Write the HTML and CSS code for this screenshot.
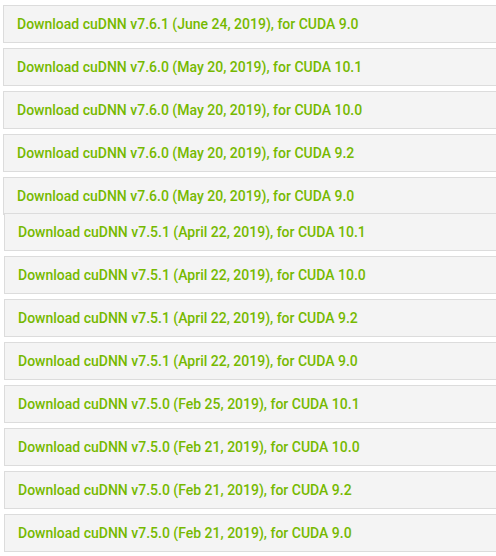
FILE: index.html
```html
<!DOCTYPE html>
<html>
<head>
<meta charset="utf-8">
<link rel="stylesheet" href="styles.css">
</head>
<body>
<div class="page">
  <div class="group first">
    <div class="item"><a>Download cuDNN v7.6.1 (June 24, 2019), for CUDA 9.0</a></div>
    <div class="item"><a>Download cuDNN v7.6.0 (May 20, 2019), for CUDA 10.1</a></div>
    <div class="item"><a>Download cuDNN v7.6.0 (May 20, 2019), for CUDA 10.0</a></div>
    <div class="item"><a>Download cuDNN v7.6.0 (May 20, 2019), for CUDA 9.2</a></div>
    <div class="item"><a>Download cuDNN v7.6.0 (May 20, 2019), for CUDA 9.0</a></div>
  </div>
  <div class="group second">
    <div class="item"><a>Download cuDNN v7.5.1 (April 22, 2019), for CUDA 10.1</a></div>
    <div class="item"><a>Download cuDNN v7.5.1 (April 22, 2019), for CUDA 10.0</a></div>
    <div class="item"><a>Download cuDNN v7.5.1 (April 22, 2019), for CUDA 9.2</a></div>
    <div class="item"><a>Download cuDNN v7.5.1 (April 22, 2019), for CUDA 9.0</a></div>
    <div class="item"><a>Download cuDNN v7.5.0 (Feb 25, 2019), for CUDA 10.1</a></div>
    <div class="item"><a>Download cuDNN v7.5.0 (Feb 21, 2019), for CUDA 10.0</a></div>
    <div class="item"><a>Download cuDNN v7.5.0 (Feb 21, 2019), for CUDA 9.2</a></div>
    <div class="item"><a>Download cuDNN v7.5.0 (Feb 21, 2019), for CUDA 9.0</a></div>
  </div>
</div>
</body>
</html>
```
FILE: styles.css
```css
html, body {
  margin: 0;
  padding: 0;
  background: #ffffff;
  overflow: hidden;
}
.page {
  padding: 5px 0 0 3px;
  margin-right: -20px;
}
.group {
  display: flex;
  flex-direction: column;
  gap: 5px;
}
.second {
  margin-top: -2px;
  margin-left: 1px;
  position: relative;
}
.item {
  box-sizing: border-box;
  height: 38px;
  background: #f4f4f4;
  border: 1px solid #dcdcdc;
  display: flex;
  align-items: center;
  padding-left: 13px;
}
.item a {
  font-family: Roboto, "Liberation Sans", sans-serif;
  font-weight: 500;
  font-size: 14px;
  color: #76b900;
  line-height: 16px;
}
```
